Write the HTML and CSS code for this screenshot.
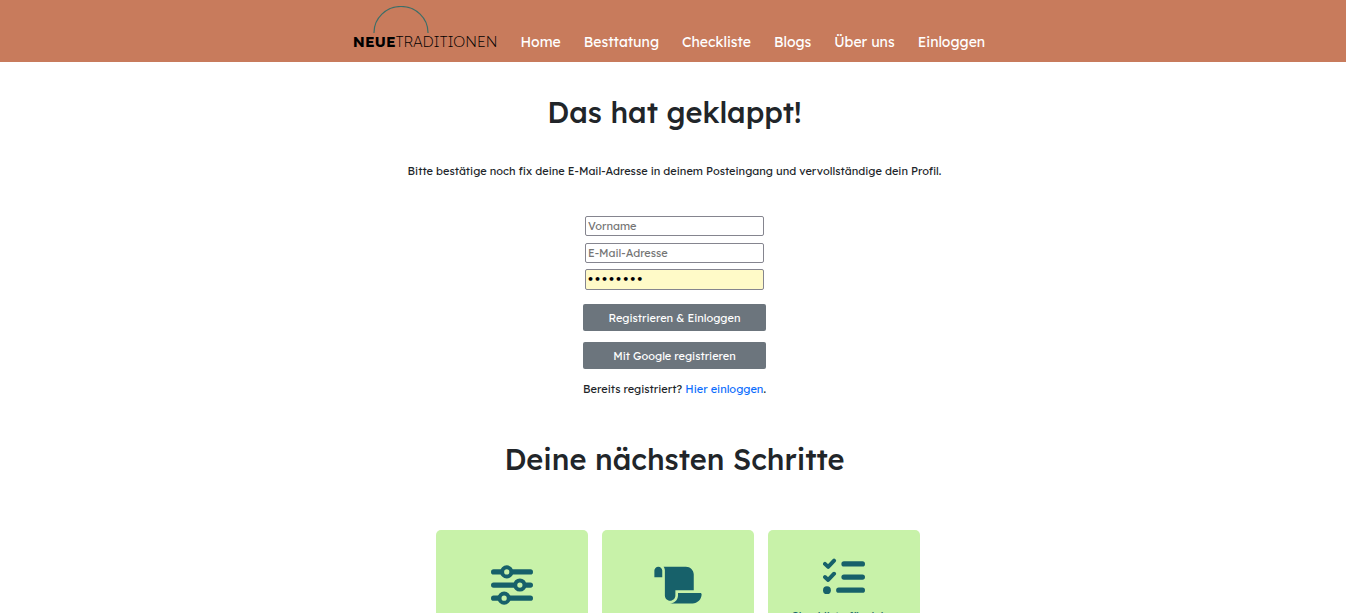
FILE: index.html
```html
<!DOCTYPE html>
<html lang="de">
<head>
<meta charset="utf-8">
<title>Neue Traditionen</title>
<link rel="stylesheet" href="styles.css">
</head>
<body>
<header class="topbar">
  <nav class="nav">
    <a class="logo" href="#">
      <svg class="logo-arc" viewBox="0 0 56 28" aria-hidden="true"><path d="M1 27V26.500a27 26 0 0 1 54 0v.5" fill="none" stroke="#3c6e68" stroke-width="1.2"/></svg>
      <span class="logo-text"><b>NEUE</b>TRADITIONEN</span>
    </a>
    <a class="nav-link" href="#">Home</a>
    <a class="nav-link" href="#">Besttatung</a>
    <a class="nav-link" href="#">Checkliste</a>
    <a class="nav-link" href="#">Blogs</a>
    <a class="nav-link" href="#">Über uns</a>
    <a class="nav-link" href="#">Einloggen</a>
  </nav>
</header>
<main class="content">
  <h1 class="title">Das hat geklappt!</h1>
  <p class="intro">Bitte bestätige noch fix deine E-Mail-Adresse in deinem Posteingang und vervollständige dein Profil.</p>
  <form class="form">
    <input class="field" type="text" placeholder="Vorname" aria-label="Vorname">
    <input class="field" type="email" placeholder="E-Mail-Adresse" aria-label="E-Mail-Adresse">
    <input class="field filled" type="password" value="passwort" aria-label="Passwort">
    <button class="btn first" type="button">Registrieren &amp; Einloggen</button>
    <button class="btn" type="button">Mit Google registrieren</button>
    <p class="login">Bereits registriert? <a class="login-link" href="#">Hier einloggen</a>.</p>
  </form>
  <h2 class="title">Deine nächsten Schritte</h2>
  <section class="cards">
    <article class="card">
      <svg class="icon" viewBox="0 0 512 512" aria-hidden="true"><g fill="none" stroke="#17616a"><path stroke-width="64" stroke-linecap="round" d="M32 96H120M264 96H480M32 256H280M424 256H480M32 416H88M232 416H480"/><g stroke-width="48"><circle cx="192" cy="96" r="56"/><circle cx="352" cy="256" r="56"/><circle cx="160" cy="416" r="56"/></g></g></svg>
    </article>
    <article class="card">
      <svg class="icon wide" viewBox="0 0 576 512" aria-hidden="true"><path fill="#17616a" d="M0 80v48c0 17.700 0 32 0 32H96V80c0-26.500-21.500-48-48-48S0 53.500 0 80zM112 32c10 13.400 16 30 16 48V384c0 35.300 28.700 64 64 64s64-28.700 64-64v-5.300c0-32.400 0-58.700 0-58.700H480V128c0-53-43-96-96-96H112zM464 480c61.900 0 112-50.100 112-112c0-8.800-7.200-16-16-16H288V384c0 53-43 96-96 96H464z"/></svg>
    </article>
    <article class="card tall">
      <svg class="icon" viewBox="0 0 512 512" aria-hidden="true"><g fill="none" stroke="#17616a" stroke-linecap="round" stroke-linejoin="round"><path stroke-width="64" d="M256 96H480M256 256H480M192 416H480"/><path stroke-width="48" d="M24 96L63 132L135 56M24 256L63 292L135 216"/></g><circle cx="48" cy="416" r="48" fill="#17616a"/></svg>
      <p class="card-text">Checkliste für deine Planung</p>
    </article>
  </section>
</main>
</body>
</html>
```
FILE: styles.css
```css
* { box-sizing: border-box; }
html { overflow-x: hidden; scrollbar-width: none; }
body { margin: 0; background: #fff; color: #212529; font-family: Lexend, Inter, sans-serif; font-size: 11px; font-weight: 450; line-height: 16px; }
.topbar { background: #c87b5c; padding: 6px 16px 12px; }
.nav { display: flex; justify-content: center; align-items: flex-end; gap: 23px; padding-right: 8px; }
.logo { display: flex; flex-direction: column; color: #000; text-decoration: none; }
.logo-arc { width: 56px; height: 28px; margin-left: 20px; }
.logo-text { font-size: 15px; line-height: 16px; font-weight: 200; }
.logo-text b { font-weight: 700; }
.nav-link { color: #fff; font-size: 14px; line-height: 16px; font-weight: 400; text-decoration: none; }
.content { display: flex; flex-direction: column; align-items: center; padding: 32px 0 40px 3px; }
.title { margin: 0; font-size: 29px; line-height: 36px; font-weight: 500; }
.intro { margin: 33px 0 37px; text-align: center; }
.form { display: flex; flex-direction: column; align-items: center; margin-bottom: 44px; }
.field { width: 179px; height: 20px; margin-bottom: 7px; padding: 1px 2px; border: 1px solid #85858f; border-radius: 2px; background: #fff; color: #000; font: inherit; font-weight: 400; }
.field::placeholder { color: #757575; }
.filled { background: #fffac8; height: 21px; margin: -1px 0 0; padding-left: 1px; font-family: "DejaVu Sans", sans-serif; font-size: 11px; font-weight: 700; }
.btn { align-self: stretch; height: 27px; margin-bottom: 11px; padding: 0; border: 0; border-radius: 2px; background: #6c757d; color: #fff; font: inherit; }
.first { margin-top: 14px; }
.login { margin: 1px 0 0; }
.login-link { color: #0d6efd; text-decoration: none; }
.cards { display: flex; gap: 14px; margin: 53px 0 0 7px; }
.card { width: 152px; height: 152px; padding: 34px 12px 12px; display: flex; flex-direction: column; align-items: center; gap: 10px; border-radius: 5px; background: #c8f2a9; color: #17616a; }
.tall { padding-top: 26px; }
.icon { width: 42px; height: 42px; flex: none; }
.wide { width: 48px; }
.card-text { margin: 0; font-weight: 400; text-align: center; }
```
